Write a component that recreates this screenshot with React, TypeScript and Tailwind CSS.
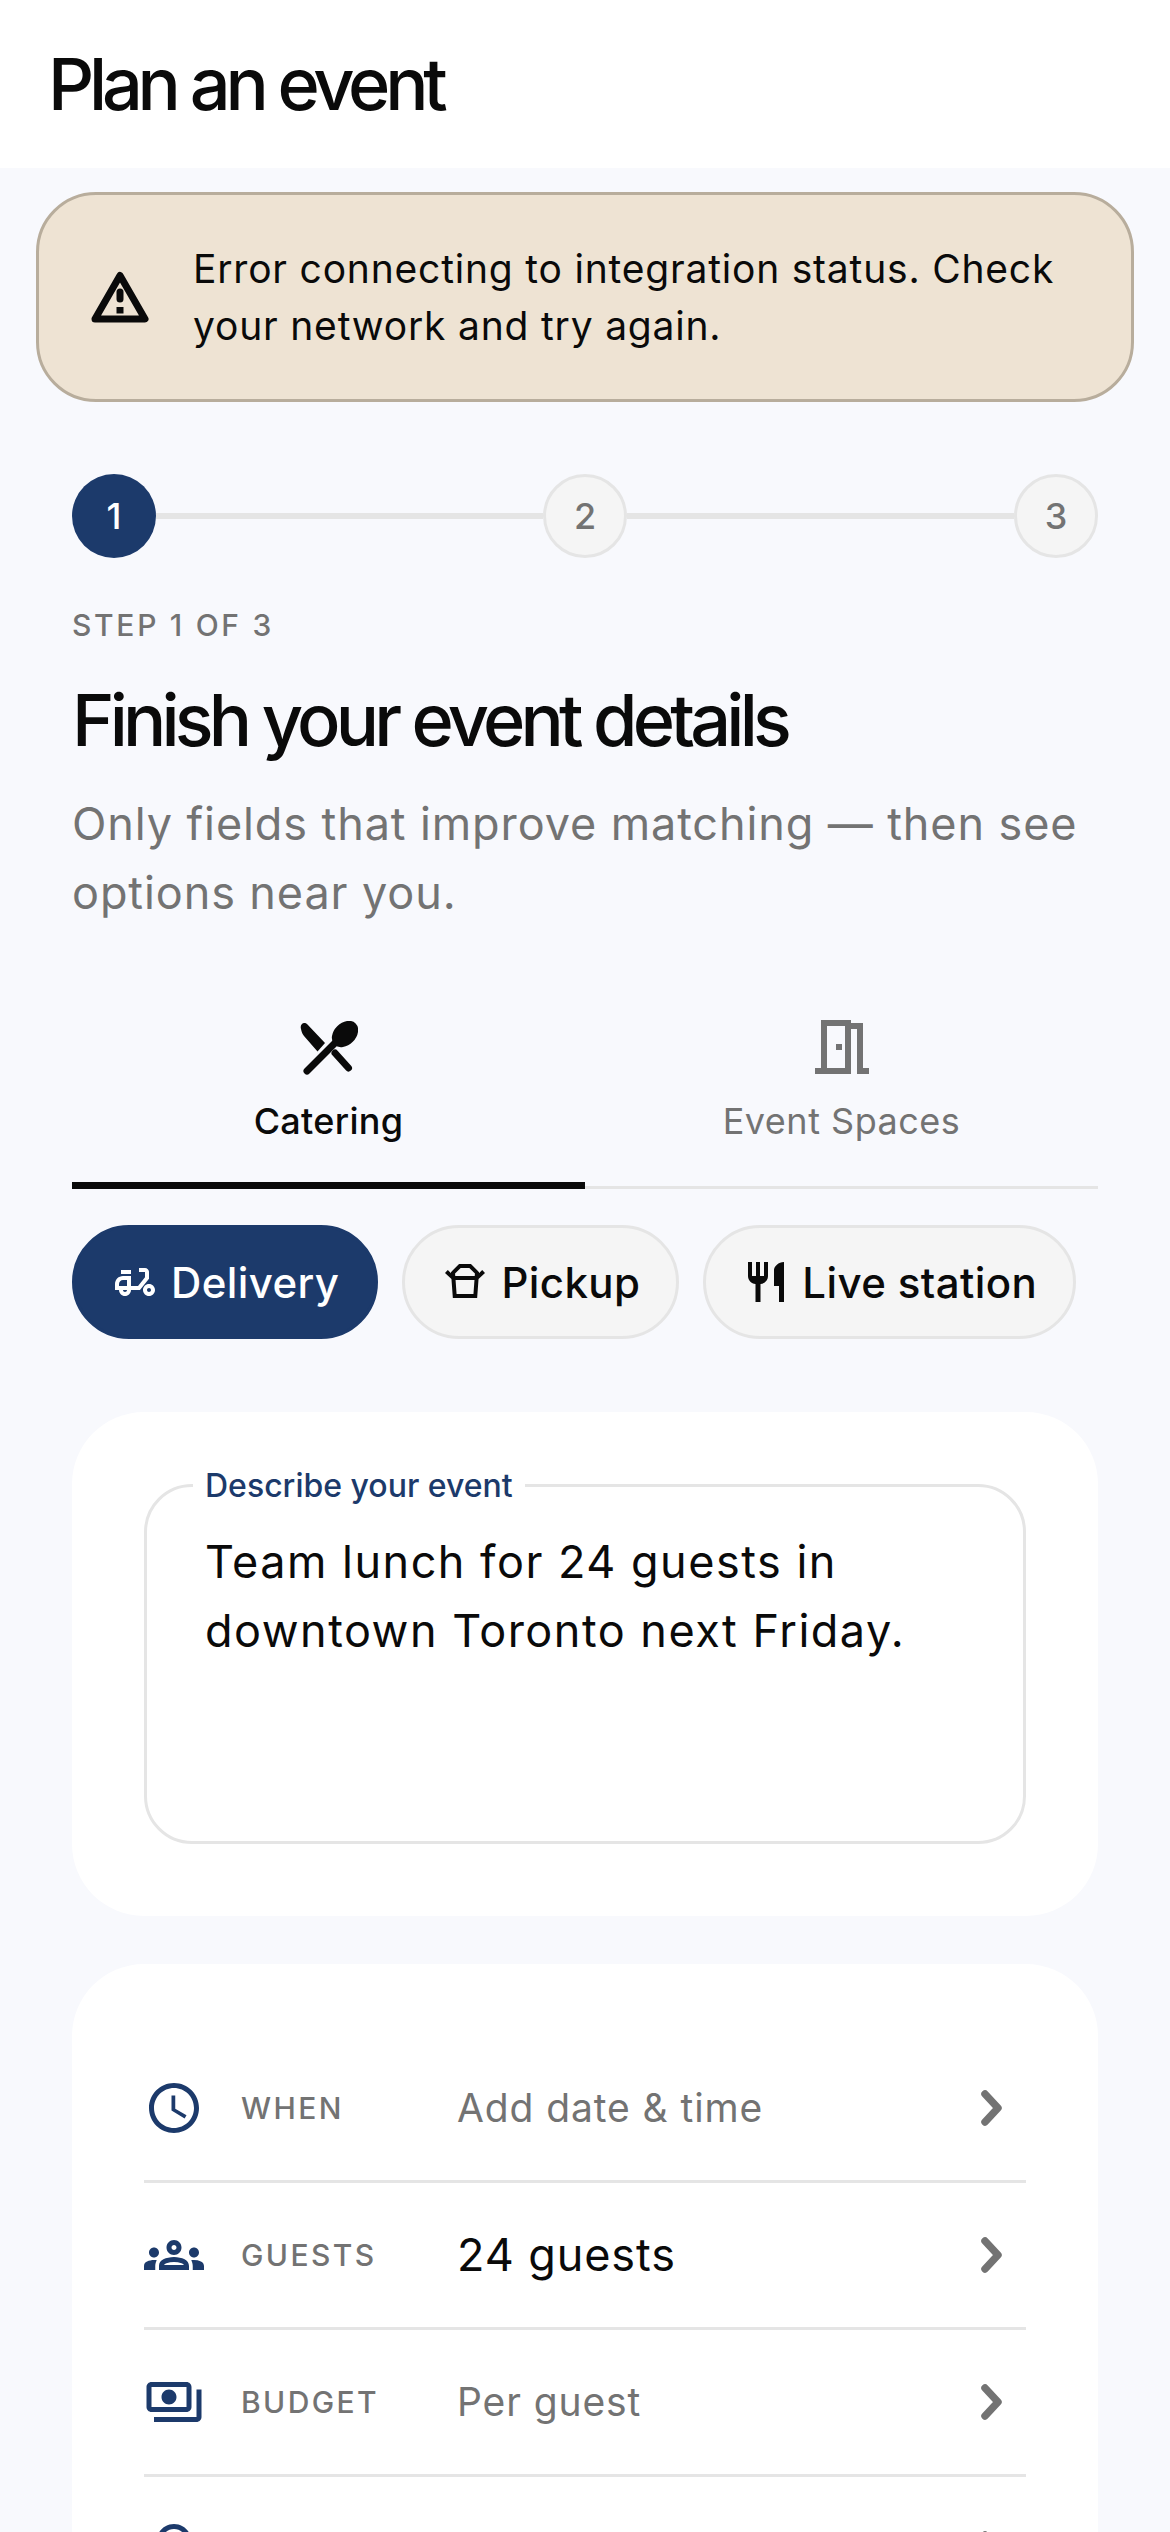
import React from 'react';
import {
  MdAccessTime,
  MdOutlineDeliveryDining,
  MdOutlineGroups,
  MdOutlineLocationOn,
  MdOutlineMeetingRoom,
  MdOutlinePayments,
  MdOutlineTakeoutDining,
  MdRestaurant,
} from 'react-icons/md';

function Step({ n, active }: { n: number; active?: boolean }) {
  return (
    <div
      className={`flex h-[84px] w-[84px] shrink-0 items-center justify-center rounded-full text-[36px] font-medium ${
        active
          ? 'bg-[#1c3a6b] text-white'
          : 'border-[3px] border-[#e5e5e5] bg-[#f5f5f5] text-[#737373]'
      }`}
    >
      {n}
    </div>
  );
}

function WarningIcon() {
  return (
    <svg viewBox="0 0 58 52" className="h-[52px] w-[58px] shrink-0" fill="none" stroke="currentColor">
      <path d="M29 4.500 L54 48 H4 Z" strokeWidth="7" strokeLinejoin="round" />
      <path d="M29 21 V28" strokeWidth="7" strokeLinecap="round" />
      <path d="M25.500 36 H32.500 V42.500 H25.500 Z" fill="currentColor" stroke="none" />
    </svg>
  );
}

function SpoonKnife() {
  return (
    <svg viewBox="0 0 58 54" className="h-[54px] w-[58px]" fill="currentColor">
      <path d="M1 8C-.5 3 4 0 7.500 3.500L25 22L17.500 30.500L4 15C2.500 13 1.500 11 1 8Z" />
      <path d="M35 32L48.500 47" stroke="currentColor" strokeWidth="7" strokeLinecap="round" />
      <path d="M7 50L35 22" stroke="currentColor" strokeWidth="7" strokeLinecap="round" />
      <ellipse cx="45" cy="13" rx="15" ry="11" transform="rotate(-45 45 13)" />
    </svg>
  );
}

function Chevron() {
  return (
    <svg viewBox="0 0 24 38" className="mr-[22px] h-[38px] w-[24px] text-[#737373]" fill="none" stroke="currentColor">
      <path d="M5 5L18 19L5 33" strokeWidth="7.500" strokeLinecap="round" strokeLinejoin="round" />
    </svg>
  );
}

function Row({
  icon,
  label,
  value,
  filled,
}: {
  icon: React.ReactNode;
  label: string;
  value: string;
  filled?: boolean;
}) {
  return (
    <div className="flex h-[147px] items-center border-b-[3px] border-[#e5e5e5]">
      <div className="flex w-[97px] shrink-0 items-center text-[#1c3a6b]">{icon}</div>
      <div className="w-[216px] shrink-0 text-[30px] font-medium tracking-[2.4px] text-[#737373]">
        {label}
      </div>
      <div
        className={`grow ${
          filled ? 'text-[45px] tracking-[0.9px] text-[#0a0a0a]' : 'text-[39px] tracking-[0.9px] text-[#737373]'
        }`}
      >
        {value}
      </div>
      <Chevron />
    </div>
  );
}

const chip =
  'flex h-[114px] items-center gap-[12px] rounded-full border-[3px] px-[36px] text-[42px] font-medium tracking-[0.4px]';

export default function App() {
  return (
    <div className="h-[2532px] overflow-hidden bg-[#f8f9fd] font-['Inter',sans-serif] text-[#0a0a0a]">
      <header className="flex h-[168px] items-center bg-white pl-[48px]">
        <h1 className="text-[72px] font-medium tracking-[-5.200px]">Plan an event</h1>
      </header>

      <div className="mx-[36px] mt-[24px] flex h-[210px] items-center gap-[44px] rounded-[60px] border-[3px] border-[#b8ad9c] bg-[#eee3d3] pl-[52px] pr-[60px]">
        <WarningIcon />
        <p className="text-[39px] leading-[57px] tracking-[0.8px]">
          Error connecting to integration status. Check your network and try again.
        </p>
      </div>

      <main className="px-[72px]">
        <div className="mt-[72px] flex items-center">
          <Step n={1} active />
          <div className="h-[6px] grow bg-[#e5e5e5]" />
          <Step n={2} />
          <div className="h-[6px] grow bg-[#e5e5e5]" />
          <Step n={3} />
        </div>

        <p className="mt-[46px] text-[30px] font-medium leading-[42px] tracking-[2.700px] text-[#737373]">
          STEP 1 OF 3
        </p>
        <h2 className="mt-[29px] text-[72px] font-medium leading-[90px] tracking-[-4.800px]">
          Finish your event details
        </h2>
        <p className="mt-[24px] text-[45px] leading-[69px] tracking-[0.9px] text-[#737373]">
          Only fields that improve matching — then see options near you.
        </p>

        <div className="mt-[72px] flex border-b-[3px] border-[#e5e5e5]">
          <div className="-mb-[3px] flex h-[190px] w-1/2 flex-col items-center border-b-[7px] border-[#0a0a0a] pt-[22px]">
            <SpoonKnife />
            <span className="mt-[19px] text-[36px] font-medium tracking-[0.3px]">Catering</span>
          </div>
          <div className="flex h-[187px] w-1/2 flex-col items-center pt-[12px] text-[#737373]">
            <MdOutlineMeetingRoom className="h-[72px] w-[72px]" />
            <span className="mt-[11px] text-[36px] tracking-[0.5px]">Event Spaces</span>
          </div>
        </div>

        <div className="mt-[36px] flex gap-[24px]">
          <div className={`${chip} border-[#1c3a6b] bg-[#1c3a6b] text-white`}>
            <MdOutlineDeliveryDining className="h-[48px] w-[48px]" />
            Delivery
          </div>
          <div className={`${chip} border-[#e5e5e5] bg-[#f5f5f5]`}>
            <MdOutlineTakeoutDining className="h-[48px] w-[48px]" />
            Pickup
          </div>
          <div className={`${chip} border-[#e5e5e5] bg-[#f5f5f5]`}>
            <MdRestaurant className="h-[48px] w-[48px]" />
            Live station
          </div>
        </div>

        <section className="mt-[73px] rounded-[72px] bg-white p-[72px]">
          <div className="relative h-[360px] rounded-[48px] border-[3px] border-[#e5e5e5] px-[58px] pt-[40px]">
            <span className="absolute left-[46px] top-[-21px] bg-white px-[12px] text-[32px] font-medium leading-[40px] text-[#1c3a6b]">
              Describe your event
            </span>
            <p className="text-[45px] leading-[69px] tracking-[1.500px]">
              Team lunch for 24 guests in downtown Toronto next Friday.
            </p>
          </div>
        </section>

        <section className="mt-[48px] rounded-[72px] bg-white px-[72px] pt-[72px] pb-[72px]">
          <Row icon={<MdAccessTime className="h-[60px] w-[60px]" />} label="WHEN" value="Add date & time" />
          <Row icon={<MdOutlineGroups className="h-[60px] w-[60px]" />} label="GUESTS" value="24 guests" filled />
          <Row icon={<MdOutlinePayments className="h-[60px] w-[60px]" />} label="BUDGET" value="Per guest" />
          <Row icon={<MdOutlineLocationOn className="h-[60px] w-[60px]" />} label="WHERE" value="Toronto" />
        </section>
      </main>
    </div>
  );
}
